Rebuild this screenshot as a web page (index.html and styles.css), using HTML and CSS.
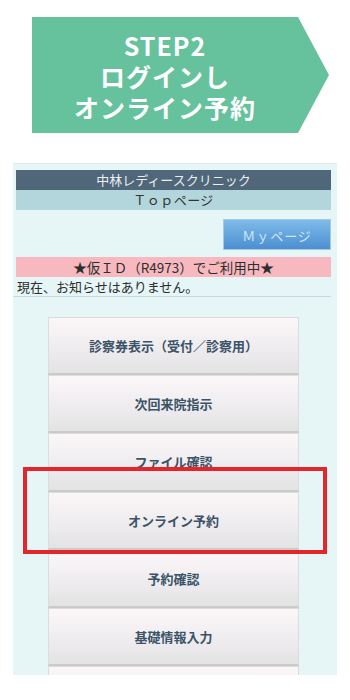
FILE: index.html
```html
<!DOCTYPE html>
<html lang="ja">
<head>
<meta charset="utf-8">
<link rel="stylesheet" href="styles.css">
</head>
<body>
<div class="step">
  <div class="step-text">STEP2<br>ログインし<br>オンライン予約</div>
</div>
<div class="phone">
  <div class="hdr">中林レディースクリニック</div>
  <div class="sub">Ｔｏｐページ</div>
  <div class="myrow"><div class="mybtn">Ｍｙページ</div></div>
  <div class="pink">★仮ＩＤ（R4973）でご利用中★</div>
  <div class="notice">現在、お知らせはありません。</div>
  <div class="menu">
    <div class="mbtn">診察券表示（受付／診察用）</div>
    <div class="mbtn">次回来院指示</div>
    <div class="mbtn">ファイル確認</div>
    <div class="mbtn">オンライン予約</div>
    <div class="mbtn">予約確認</div>
    <div class="mbtn">基礎情報入力</div>
    <div class="mbtn"></div>
  </div>
</div>
<div class="highlight"></div>
</body>
</html>
```
FILE: styles.css
```css
html, body {
  margin: 0;
  padding: 0;
  background: #ffffff;
}
body {
  position: relative;
  width: 350px;
  height: 700px;
  overflow: hidden;
  font-family: "Noto Sans CJK JP", "Noto Sans", sans-serif;
}
.step {
  margin: 17px 0 0 32px;
  width: 297px;
  height: 116px;
  background: #66c29d;
  clip-path: polygon(0 0, 266px 0, 100% 50%, 266px 100%, 0 100%);
  display: flex;
  align-items: center;
  justify-content: center;
  padding-right: 31px;
  box-sizing: border-box;
}
.step-text {
  color: #ffffff;
  font-weight: 700;
  font-size: 25px;
  line-height: 31px;
  text-align: center;
  letter-spacing: 1px;
  padding-top: 2px;
}
.phone {
  margin: 30px 0 0 13px;
  width: 324px;
  height: 512px;
  box-sizing: border-box;
  padding: 6px 6px 0 3px;
  background: #e6f5f6;
  overflow: hidden;
  border-top: 1px solid #dfeaec;
}
.hdr {
  height: 20px;
  line-height: 20px;
  background: #4f6779;
  color: #e9eff3;
  font-size: 13px;
  text-align: center;
}
.sub {
  height: 20px;
  line-height: 20px;
  background: #b3d6dd;
  color: #333;
  font-size: 13px;
  text-align: center;
  letter-spacing: 0.5px;
}
.myrow {
  display: flex;
  justify-content: flex-end;
  margin-top: 9px;
}
.mybtn {
  width: 108px;
  height: 31px;
  line-height: 31px;
  box-sizing: border-box;
  background: linear-gradient(#7fbbea, #4b8fd0);
  border: 1px solid #a9c8e2;
  color: #d3e6f5;
  font-size: 13px;
  text-align: center;
  letter-spacing: 1px;
}
.pink {
  margin-top: 7px;
  height: 20px;
  line-height: 20px;
  background: #f7b9bf;
  color: #2e2e2e;
  font-size: 13.5px;
  text-align: center;
}
.notice {
  height: 20px;
  line-height: 19px;
  font-size: 13px;
  color: #2e2e2e;
  border-bottom: 1px solid #c9d7dd;
  box-sizing: border-box;
  margin-left: -3px;
  padding-left: 4px;
}
.menu {
  margin: 20px auto 0;
  width: 251px;
  display: flex;
  flex-direction: column;
}
.mbtn {
  height: 58.2px;
  flex: none;
  box-sizing: border-box;
  background: linear-gradient(#fbf7f9 0%, #efecef 55%, #e3e3e3 100%);
  border: 1px solid #dadcdd;
  border-bottom: 2px solid #c9cacb;
  display: flex;
  align-items: center;
  justify-content: center;
  color: #3b5367;
  font-size: 13px;
  font-weight: 700;
}
.highlight {
  position: absolute;
  left: 23px;
  top: 467px;
  width: 304px;
  height: 87px;
  box-sizing: border-box;
  border: 4px solid #e2262a;
}
```
